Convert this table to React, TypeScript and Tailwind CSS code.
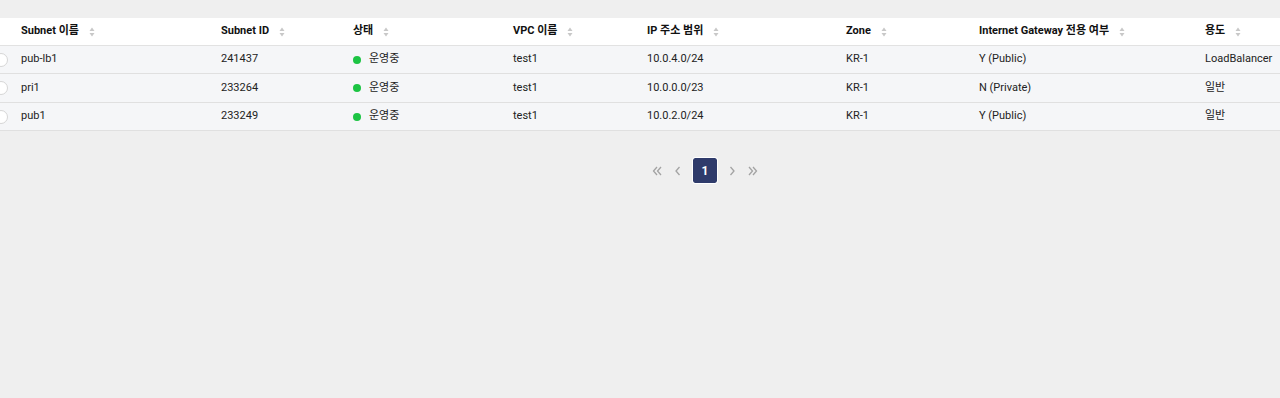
import React from "react";

const cols = [
  { label: "Subnet 이름", w: "w-[200px]" },
  { label: "Subnet ID", w: "w-[132px]" },
  { label: "상태", w: "w-[160px]" },
  { label: "VPC 이름", w: "w-[134px]" },
  { label: "IP 주소 범위", w: "w-[199px]" },
  { label: "Zone", w: "w-[133px]" },
  { label: "Internet Gateway 전용 여부", w: "w-[226px]" },
  { label: "용도", w: "w-[140px]" },
];

const rows = [
  { h: "h-[28px]", cells: ["pub-lb1", "241437", "운영중", "test1", "10.0.4.0/24", "KR-1", "Y (Public)", "LoadBalancer"] },
  { h: "h-[29px]", cells: ["pri1", "233264", "운영중", "test1", "10.0.0.0/23", "KR-1", "N (Private)", "일반"] },
  { h: "h-[28px]", cells: ["pub1", "233249", "운영중", "test1", "10.0.2.0/24", "KR-1", "Y (Public)", "일반"] },
];

function SortIcon() {
  return (
    <svg width="6" height="10" viewBox="0 0 6 10" className="ml-[10px] shrink-0">
      <path d="M3 0.5 L5.5 4 L0.5 4 Z" fill="#c8c8c8" />
      <path d="M3 9.5 L5.5 6 L0.5 6 Z" fill="#c8c8c8" />
    </svg>
  );
}

function Chevron({ double, left }: { double?: boolean; left?: boolean }) {
  return (
    <svg width="12" height="12" viewBox="0 0 12 12" fill="none" stroke="#a3a3a3" strokeWidth="1.3">
      <g transform={left ? "" : "translate(12 0) scale(-1 1)"}>
        {double ? (
          <>
            <path d="M6 2 L2.5 6 L6 10" />
            <path d="M10 2 L6.5 6 L10 10" />
          </>
        ) : (
          <path d="M7.5 2 L4 6 L7.5 10" />
        )}
      </g>
    </svg>
  );
}

export default function App() {
  return (
    <div
      className="w-[1280px] h-[398px] bg-[#efefef] overflow-hidden pt-[18px] text-[11px] text-[#222]"
      style={{ fontFamily: 'Roboto, "Noto Sans CJK KR", sans-serif' }}
    >
      <div className="ml-[-20px] w-[1400px]">
        {/* Header */}
        <div className="flex h-[28px] items-center bg-white border-b border-[#e2e2e2]">
          <div className="w-[41px] shrink-0" />
          {cols.map((c) => (
            <div key={c.label} className={`${c.w} shrink-0 flex items-center font-bold text-[#111]`}>
              {c.label}
              <SortIcon />
            </div>
          ))}
        </div>

        {/* Rows */}
        {rows.map((r, i) => (
          <div key={i} className={`flex ${r.h} items-center bg-[#f5f6f8] border-b border-[#e0e0e0]`}>
            <div className="w-[41px] shrink-0 flex justify-center">
              <span className="w-[14px] h-[14px] rounded-full bg-white border border-[#d6d6d6]" />
            </div>
            {r.cells.map((v, j) => (
              <div key={j} className={`${cols[j].w} shrink-0 flex items-center`}>
                {j === 2 ? (
                  <>
                    <span className="w-[8px] h-[8px] rounded-full bg-[#1cc443] mr-[8px]" />
                    {v}
                  </>
                ) : (
                  v
                )}
              </div>
            ))}
          </div>
        ))}
      </div>

      {/* Pagination */}
      <div className="flex justify-center items-center mt-[27px] pl-[130px]">
        <div className="flex items-center gap-[9px]">
          <Chevron double left />
          <Chevron left />
          <div className="w-[24px] h-[25px] flex items-center justify-center bg-[#2f3b6b] text-white font-bold text-[12px] rounded-[2px] outline outline-1 outline-white">
            1
          </div>
          <Chevron />
          <Chevron double />
        </div>
      </div>
    </div>
  );
}
